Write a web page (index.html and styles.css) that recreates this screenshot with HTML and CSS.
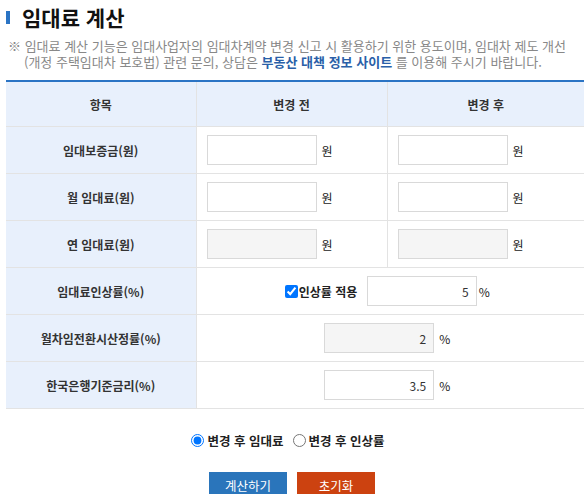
FILE: index.html
```html
<!DOCTYPE html>
<html lang="ko">

<head>
    <meta charset="UTF-8">
    <meta name="viewport" content="width=device-width, initial-scale=1.0">
    <title>임대료 계산</title>
    <link rel="stylesheet" href="styles.css">
</head>

<body>
    <div class="wrap">
        <h2 class="title"><span class="bar"></span>임대료 계산</h2>
        <p class="note">※ 임대료 계산 기능은 임대사업자의 임대차계약 변경 신고 시 활용하기 위한 용도이며, 임대차 제도 개선<br>(개정 주택임대차 보호법) 관련 문의, 상담은 <b class="link">부동산 대책 정보 사이트</b> 를 이용해 주시기 바랍니다.</p>

        <table class="calc">
            <colgroup>
                <col class="c1">
                <col class="c2">
                <col>
            </colgroup>
            <thead>
                <tr>
                    <th>항목</th>
                    <th>변경 전</th>
                    <th>변경 후</th>
                </tr>
            </thead>
            <tbody>
                <tr>
                    <th>임대보증금(원)</th>
                    <td><input type="text" class="num"><span class="unit">원</span></td>
                    <td><input type="text" class="num"><span class="unit">원</span></td>
                </tr>
                <tr>
                    <th>월 임대료(원)</th>
                    <td><input type="text" class="num"><span class="unit">원</span></td>
                    <td><input type="text" class="num"><span class="unit">원</span></td>
                </tr>
                <tr>
                    <th>연 임대료(원)</th>
                    <td><input type="text" class="num" readonly><span class="unit">원</span></td>
                    <td><input type="text" class="num" readonly><span class="unit">원</span></td>
                </tr>
                <tr>
                    <th>임대료인상률(%)</th>
                    <td colspan="2" class="mid">
                        <label class="chk"><input type="checkbox" checked>인상률 적용</label>
                        <input type="text" class="num" value="5"><span class="unit pct">%</span>
                    </td>
                </tr>
                <tr>
                    <th>월차임전환시산정률(%)</th>
                    <td colspan="2" class="mid">
                        <input type="text" class="num" value="2" readonly><span class="unit">%</span>
                    </td>
                </tr>
                <tr>
                    <th>한국은행기준금리(%)</th>
                    <td colspan="2" class="mid">
                        <input type="text" class="num" value="3.5"><span class="unit">%</span>
                    </td>
                </tr>
            </tbody>
        </table>

        <div class="radios">
            <label><input type="radio" name="mode" checked>변경 후 임대료</label>
            <label><input type="radio" name="mode">변경 후 인상률</label>
        </div>

        <div class="btns">
            <button type="button" class="btn calcBtn">계산하기</button>
            <button type="button" class="btn resetBtn">초기화</button>
        </div>
    </div>
</body>

</html>
```

FILE: styles.css
```css
body {
    margin: 0;
    font-family: "Noto Sans CJK KR", "Noto Sans", sans-serif;
    color: #333;
    background: #fff;
}

.wrap {
    padding: 0 6px;
}

.title {
    display: flex;
    align-items: center;
    gap: 12px;
    margin: 0;
    padding-top: 4px;
    font-size: 21px;
    line-height: 27px;
    font-weight: bold;
    color: #111;
}

.title>.bar {
    display: inline-block;
    width: 4px;
    height: 13px;
    background-color: #2b74c4;
}

.note {
    margin: 7px 0 0;
    padding-left: 18px;
    text-indent: -16px;
    font-size: 13px;
    line-height: 16px;
    color: #888;
    white-space: nowrap;
}

.note>.link {
    color: #2a5fa8;
}

.calc {
    margin-top: 10px;
    width: 578px;
    border-collapse: collapse;
    border-top: 2px solid #2b74c4;
    font-size: 12px;
}

.calc col.c1 {
    width: 190px;
}

.calc col.c2 {
    width: 191px;
}

.calc th,
.calc td {
    height: 46px;
    padding: 0;
    border: 1px solid #e3e3e3;
    border-top: 0;
}

.calc tr>*:first-child {
    border-left: 0;
}

.calc tr>*:last-child {
    border-right: 0;
}

.calc thead th {
    height: 44px;
    background-color: #e8f0fc;
    font-weight: bold;
    color: #333;
}

.calc tbody th {
    background-color: #e8f0fc;
    font-weight: bold;
    color: #333;
}

.calc td {
    padding-left: 10px;
    white-space: nowrap;
}

.calc td.mid {
    padding: 0 6px 0 0;
    text-align: center;
}

.num {
    box-sizing: border-box;
    width: 110px;
    height: 30px;
    margin: 0;
    padding: 0 7px 0 4px;
    border: 1px solid #d9d9d9;
    background-color: #fff;
    text-align: right;
    font-family: inherit;
    font-size: 12px;
    color: #333;
    vertical-align: middle;
}

.num[readonly] {
    background-color: #f5f5f5;
}

.unit {
    margin-left: 5px;
    vertical-align: middle;
    color: #222;
}

.unit.pct {
    margin-left: 2px;
}

.chk {
    display: inline-flex;
    align-items: center;
    margin-right: 6px;
    font-weight: bold;
    color: #222;
    vertical-align: middle;
}

.chk>input {
    width: 13px;
    height: 13px;
    margin: 0 1px 0 0;
}

.radios {
    display: flex;
    justify-content: center;
    gap: 9px;
    margin-top: 22px;
    padding-right: 8px;
    font-size: 12.5px;
    font-weight: bold;
    color: #222;
}

.radios>label {
    display: inline-flex;
    align-items: center;
}

.radios input {
    width: 13px;
    height: 13px;
    margin: 0 3px 0 0;
}

.btns {
    display: flex;
    justify-content: center;
    gap: 10px;
    margin-top: 22px;
}

.btn {
    width: 78px;
    height: 26px;
    border: 0;
    color: #fff;
    font-family: inherit;
    font-size: 12.5px;
}

.calcBtn {
    background-color: #2a75bb;
}

.resetBtn {
    background-color: #cc4210;
}
```
